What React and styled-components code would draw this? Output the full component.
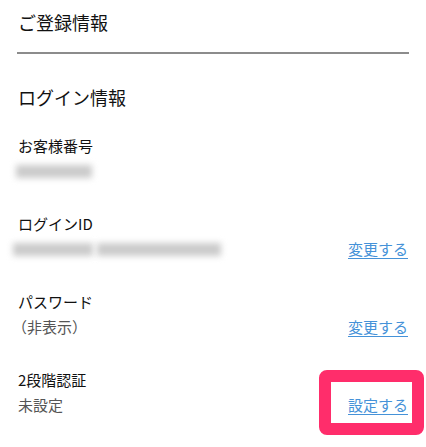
import React from 'react';
import styled, { createGlobalStyle } from 'styled-components';

const GlobalStyle = createGlobalStyle`
  html, body {
    margin: 0;
    padding: 0;
    background: #fff;
  }
  body {
    font-family: "Noto Sans CJK JP", "Noto Sans", sans-serif;
    color: #222;
  }
`;

const Page = styled.div`
  width: 426px;
  min-height: 447px;
  padding: 0 17px 0 18px;
  box-sizing: border-box;
  overflow: hidden;
`;

const Header = styled.div`
  padding: 8px 0 16px;
  border-bottom: 2px solid #8c8c8c;
  margin-left: -1px;
`;

const Title = styled.h1`
  margin: 0 0 0 1px;
  font-size: 18px;
  line-height: 28px;
  font-weight: 400;
  color: #111;
`;

const SectionTitle = styled.h2`
  margin: 29px 0 23px;
  font-size: 18px;
  line-height: 28px;
  font-weight: 400;
  color: #111;
`;

const Item = styled.div`
  & + & {
    margin-top: 28px;
  }
`;

const Label = styled.div`
  font-size: 15px;
  line-height: 24px;
  font-weight: 400;
  color: #111;
`;

const ValueRow = styled.div`
  display: flex;
  align-items: center;
  justify-content: space-between;
  height: 26px;
`;

const Value = styled.span`
  font-size: 15px;
  line-height: 26px;
  color: #555;
  margin-left: ${(p) => (p.$paren ? '-6px' : '0')};
`;

const Blur = styled.span`
  display: flex;
  gap: 4px;
  margin-left: ${(p) => p.$offset}px;
`;

const BlurBar = styled.span`
  display: block;
  width: ${(p) => p.$w}px;
  height: 13px;
  background: #cbcbcb;
  filter: blur(3px);
`;

const LinkWrap = styled.span`
  position: relative;
  display: inline-block;
  ${(p) =>
    p.$marked &&
    `
    &::before {
      content: '';
      position: absolute;
      top: -22px;
      right: -15px;
      bottom: -17px;
      left: -29px;
      border: 12px solid #ff2d6b;
      border-radius: 8px;
      pointer-events: none;
    }
  `}
`;

const Link = styled.a`
  font-size: 15px;
  line-height: 26px;
  color: #4592d8;
  text-decoration: underline;
  text-underline-offset: 3px;
  margin-right: 1px;
`;

const App = () => {
  return (
    <>
      <GlobalStyle />
      <Page>
        <Header>
          <Title>ご登録情報</Title>
        </Header>
        <SectionTitle>ログイン情報</SectionTitle>

        <Item>
          <Label>お客様番号</Label>
          <ValueRow>
            <Blur $offset={-2}>
              <BlurBar $w={76} />
            </Blur>
          </ValueRow>
        </Item>

        <Item>
          <Label>ログインID</Label>
          <ValueRow>
            <Blur $offset={-5}>
              <BlurBar $w={80} />
              <BlurBar $w={124} />
            </Blur>
            <LinkWrap>
              <Link href="#">変更する</Link>
            </LinkWrap>
          </ValueRow>
        </Item>

        <Item>
          <Label>パスワード</Label>
          <ValueRow>
            <Value $paren>（非表示）</Value>
            <LinkWrap>
              <Link href="#">変更する</Link>
            </LinkWrap>
          </ValueRow>
        </Item>

        <Item>
          <Label>2段階認証</Label>
          <ValueRow>
            <Value>未設定</Value>
            <LinkWrap $marked>
              <Link href="#">設定する</Link>
            </LinkWrap>
          </ValueRow>
        </Item>
      </Page>
    </>
  );
};

export default App;
